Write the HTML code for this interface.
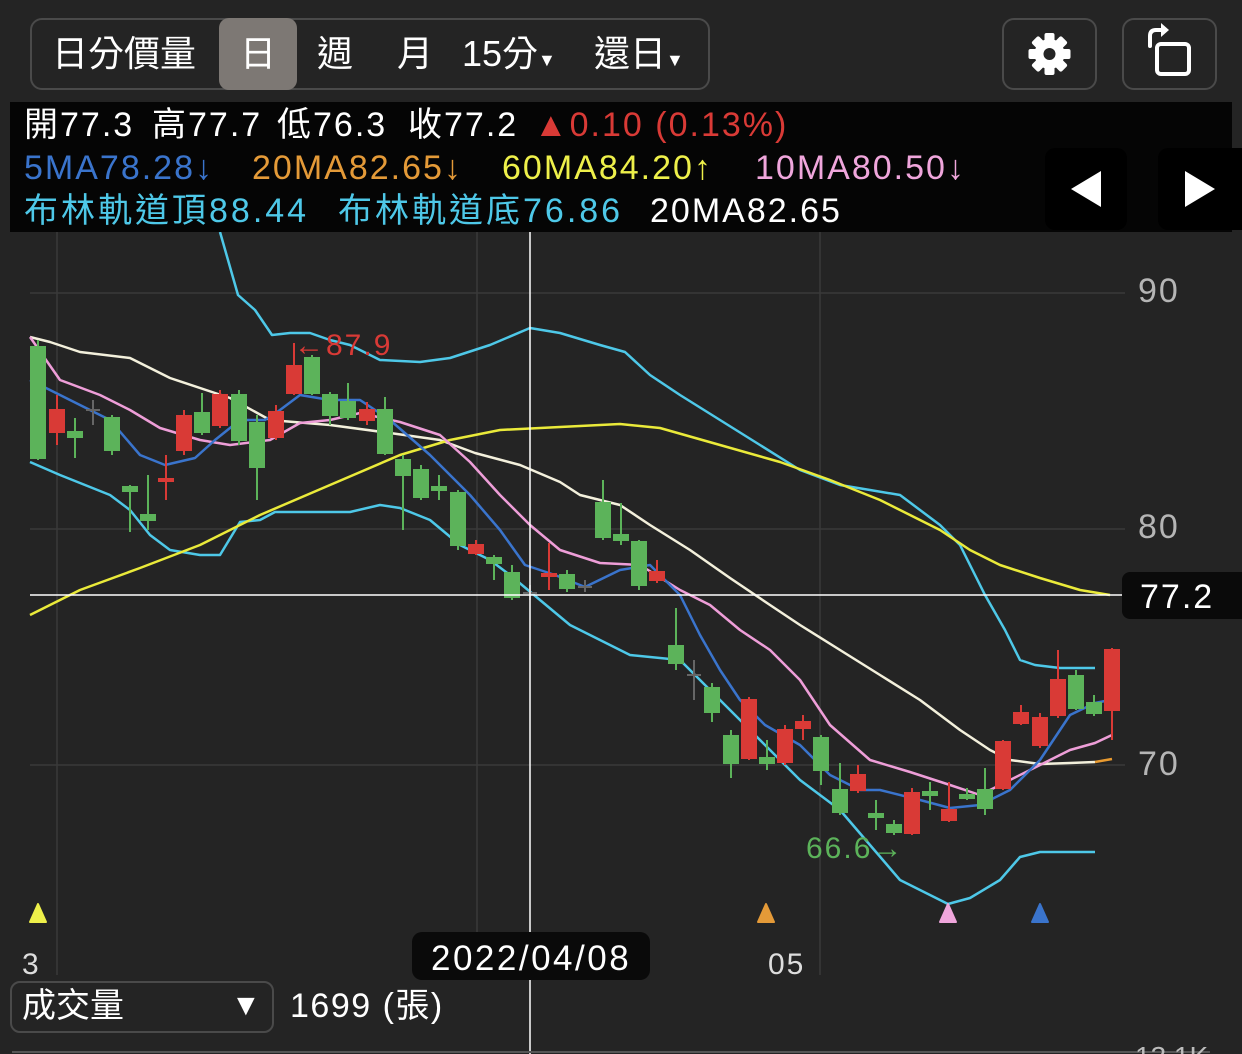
<!DOCTYPE html>
<html><head><meta charset="utf-8">
<style>
html,body{margin:0;padding:0;background:#242424;width:1242px;height:1054px;overflow:hidden;font-family:"Liberation Sans","Noto Sans CJK TC",sans-serif;color:#fff}
.abs{position:absolute}
.t{position:absolute;font-size:34px;line-height:42px;white-space:nowrap;letter-spacing:2px}
</style></head><body>
<div class="abs" style="left:30px;top:18px;width:676px;height:68px;border:2px solid #4a4a4a;border-radius:12px;"></div>
<div class="abs" style="left:219px;top:18px;width:78px;height:72px;background:#7d7874;border-radius:10px;"></div>
<div class="abs" style="left:52px;top:30px;font-size:36px;line-height:48px;white-space:nowrap">日分價量</div>
<div class="abs" style="left:240px;top:30px;font-size:36px;line-height:48px">日</div>
<div class="abs" style="left:317px;top:30px;font-size:36px;line-height:48px">週</div>
<div class="abs" style="left:397px;top:30px;font-size:36px;line-height:48px">月</div>
<div class="abs" style="left:462px;top:30px;font-size:36px;line-height:48px;white-space:nowrap">15分<span style="font-size:18px">▼</span></div>
<div class="abs" style="left:594px;top:30px;font-size:36px;line-height:48px;white-space:nowrap">還日<span style="font-size:18px">▼</span></div>

<div class="abs" style="left:1002px;top:18px;width:91px;height:68px;border:2px solid #4a4a4a;border-radius:12px"></div>
<div class="abs" style="left:1122px;top:18px;width:91px;height:68px;border:2px solid #4a4a4a;border-radius:12px"></div>
<svg class="abs" style="left:1002px;top:18px" width="95" height="72" viewBox="0 0 95 72">
<g transform="translate(47.5,36)" fill="#fff">
<circle r="15"/>
<g><rect x="-5" y="-21" width="10" height="9" rx="2"/><rect x="-5" y="12" width="10" height="9" rx="2"/><rect x="-21" y="-5" width="9" height="10" rx="2"/><rect x="12" y="-5" width="9" height="10" rx="2"/></g>
<g transform="rotate(45)"><rect x="-5" y="-21" width="10" height="9" rx="2"/><rect x="-5" y="12" width="10" height="9" rx="2"/><rect x="-21" y="-5" width="9" height="10" rx="2"/><rect x="12" y="-5" width="9" height="10" rx="2"/></g>
<circle r="6" fill="#242424"/></g></svg>
<svg class="abs" style="left:1122px;top:18px" width="95" height="72" viewBox="0 0 95 72">
<rect x="35" y="26" width="32" height="30" rx="4" fill="none" stroke="#fff" stroke-width="4"/>
<path d="M28 28 V18 Q28 12 34 12 H41" fill="none" stroke="#fff" stroke-width="4" stroke-linecap="round"/>
<path d="M39 5 L47 12 L39 19 Z" fill="#fff"/></svg>

<svg class="abs" style="left:0;top:0" width="1242" height="1054" viewBox="0 0 1242 1054">
<g stroke="#3a3a3a" stroke-width="1.5">
<line x1="30" y1="293" x2="1125" y2="293"/><line x1="30" y1="529" x2="1125" y2="529"/><line x1="30" y1="765" x2="1125" y2="765"/>
<line x1="57" y1="232" x2="57" y2="975"/><line x1="477" y1="232" x2="477" y2="975"/><line x1="820" y1="232" x2="820" y2="975"/>
</g>
<g fill="none" stroke-width="2.5" stroke-linejoin="round">
<polyline stroke="#4ec8e8" points="220,232 238,295 255,310 272,335 290,333 310,333 330,340 350,345 380,360 420,362 450,358 490,345 530,328 560,333 600,345 625,352 650,375 680,395 720,420 760,445 800,470 840,485 870,490 900,495 940,525 960,545 985,595 1005,630 1020,660 1035,665 1060,668 1095,668"/>
<polyline stroke="#4ec8e8" points="30,462 60,475 90,487 110,495 130,510 150,535 170,550 200,555 220,555 240,522 260,520 275,512 300,512 350,512 380,505 400,508 430,520 460,545 490,560 510,575 540,600 570,625 600,640 630,655 680,660 720,700 760,740 800,780 840,810 870,845 900,880 948,904 970,898 1000,880 1020,857 1040,852 1095,852"/>
<polyline stroke="#f3f0dc" points="30,337 50,342 80,352 130,358 170,378 230,398 270,420 330,425 390,433 440,440 475,453 520,465 560,482 580,495 620,505 650,525 690,550 730,578 770,605 800,625 840,650 880,675 920,700 960,730 990,750 1010,760 1040,764 1070,763 1095,762"/>
<polyline stroke="#e89a30" points="1095,762 1112,759"/>
<polyline stroke="#eaea3a" points="30,615 80,590 140,568 200,545 260,515 330,485 400,455 450,440 500,430 560,427 620,424 660,428 720,445 780,462 830,480 880,500 940,530 970,550 1000,565 1040,578 1080,590 1110,595"/>
<polyline stroke="#ee9ed8" points="30,337 60,380 100,395 130,410 160,428 200,440 230,445 270,440 300,423 330,420 360,413 400,422 440,435 470,462 500,495 530,525 560,550 600,563 640,565 680,590 710,605 740,630 770,650 800,680 830,725 870,760 910,772 950,785 980,795 1010,780 1040,765 1070,750 1095,743 1112,735"/>
<polyline stroke="#3a74cc" points="30,380 50,390 80,405 110,420 140,455 165,465 195,458 215,440 240,420 265,420 280,410 300,395 330,400 360,400 390,420 430,455 470,495 500,530 525,565 555,575 585,587 620,570 650,565 680,595 700,635 720,670 740,700 765,725 800,745 830,775 860,790 880,790 920,800 950,808 980,805 1010,790 1040,760 1070,715 1095,703 1110,700"/>
</g>
<g stroke-width="2">
<g fill="#5cb35a" stroke="#5cb35a">
<line x1="38" y1="340" x2="38" y2="460"/><rect x="31" y="347" width="14" height="111"/>
<line x1="75" y1="418" x2="75" y2="458"/><rect x="68" y="432" width="14" height="5"/>
<line x1="112" y1="415" x2="112" y2="455"/><rect x="105" y="418" width="14" height="32"/>
<line x1="130" y1="485" x2="130" y2="532"/><rect x="123" y="487" width="14" height="4"/>
<line x1="148" y1="475" x2="148" y2="530"/><rect x="141" y="515" width="14" height="5"/>
<line x1="202" y1="393" x2="202" y2="435"/><rect x="195" y="413" width="14" height="19"/>
<line x1="239" y1="390" x2="239" y2="445"/><rect x="232" y="395" width="14" height="45"/>
<line x1="257" y1="415" x2="257" y2="500"/><rect x="250" y="423" width="14" height="44"/>
<line x1="312" y1="355" x2="312" y2="395"/><rect x="305" y="358" width="14" height="35"/>
<line x1="330" y1="392" x2="330" y2="425"/><rect x="323" y="395" width="14" height="20"/>
<line x1="348" y1="383" x2="348" y2="420"/><rect x="341" y="402" width="14" height="15"/>
<line x1="385" y1="397" x2="385" y2="455"/><rect x="378" y="410" width="14" height="43"/>
<line x1="403" y1="455" x2="403" y2="530"/><rect x="396" y="460" width="14" height="15"/>
<line x1="421" y1="465" x2="421" y2="500"/><rect x="414" y="470" width="14" height="27"/>
<line x1="439" y1="475" x2="439" y2="500"/><rect x="432" y="487" width="14" height="3"/>
<line x1="458" y1="490" x2="458" y2="550"/><rect x="451" y="493" width="14" height="52"/>
<line x1="494" y1="555" x2="494" y2="580"/><rect x="487" y="558" width="14" height="5"/>
<line x1="512" y1="565" x2="512" y2="600"/><rect x="505" y="573" width="14" height="24"/>
<line x1="567" y1="570" x2="567" y2="592"/><rect x="560" y="575" width="14" height="13"/>
<line x1="603" y1="480" x2="603" y2="540"/><rect x="596" y="503" width="14" height="34"/>
<line x1="621" y1="503" x2="621" y2="545"/><rect x="614" y="535" width="14" height="5"/>
<line x1="639" y1="540" x2="639" y2="590"/><rect x="632" y="542" width="14" height="43"/>
<line x1="676" y1="608" x2="676" y2="670"/><rect x="669" y="646" width="14" height="17"/>
<line x1="712" y1="683" x2="712" y2="722"/><rect x="705" y="688" width="14" height="24"/>
<line x1="731" y1="730" x2="731" y2="778"/><rect x="724" y="736" width="14" height="27"/>
<line x1="767" y1="740" x2="767" y2="770"/><rect x="760" y="758" width="14" height="5"/>
<line x1="821" y1="735" x2="821" y2="785"/><rect x="814" y="738" width="14" height="32"/>
<line x1="840" y1="763" x2="840" y2="815"/><rect x="833" y="790" width="14" height="22"/>
<line x1="876" y1="800" x2="876" y2="830"/><rect x="869" y="814" width="14" height="3"/>
<line x1="894" y1="820" x2="894" y2="835"/><rect x="887" y="825" width="14" height="7"/>
<line x1="930" y1="782" x2="930" y2="810"/><rect x="923" y="792" width="14" height="3"/>
<line x1="967" y1="788" x2="967" y2="800"/><rect x="960" y="795" width="14" height="3"/>
<line x1="985" y1="768" x2="985" y2="815"/><rect x="978" y="790" width="14" height="18"/>
<line x1="1076" y1="670" x2="1076" y2="710"/><rect x="1069" y="676" width="14" height="32"/>
<line x1="1094" y1="695" x2="1094" y2="716"/><rect x="1087" y="703" width="14" height="10"/>
</g>
<g fill="#d93a36" stroke="#d93a36">
<line x1="57" y1="395" x2="57" y2="445"/><rect x="50" y="410" width="14" height="22"/>
<line x1="166" y1="455" x2="166" y2="500"/><rect x="159" y="479" width="14" height="2"/>
<line x1="184" y1="410" x2="184" y2="455"/><rect x="177" y="416" width="14" height="34"/>
<line x1="220" y1="390" x2="220" y2="428"/><rect x="213" y="395" width="14" height="30"/>
<line x1="276" y1="405" x2="276" y2="440"/><rect x="269" y="412" width="14" height="25"/>
<line x1="294" y1="343" x2="294" y2="395"/><rect x="287" y="366" width="14" height="27"/>
<line x1="367" y1="402" x2="367" y2="425"/><rect x="360" y="410" width="14" height="10"/>
<line x1="476" y1="540" x2="476" y2="555"/><rect x="469" y="545" width="14" height="8"/>
<line x1="549" y1="543" x2="549" y2="590"/><rect x="542" y="574" width="14" height="2"/>
<line x1="657" y1="560" x2="657" y2="583"/><rect x="650" y="572" width="14" height="8"/>
<line x1="749" y1="697" x2="749" y2="760"/><rect x="742" y="700" width="14" height="58"/>
<line x1="785" y1="725" x2="785" y2="765"/><rect x="778" y="730" width="14" height="32"/>
<line x1="803" y1="715" x2="803" y2="740"/><rect x="796" y="722" width="14" height="6"/>
<line x1="858" y1="765" x2="858" y2="793"/><rect x="851" y="775" width="14" height="15"/>
<line x1="912" y1="788" x2="912" y2="835"/><rect x="905" y="793" width="14" height="40"/>
<line x1="949" y1="782" x2="949" y2="822"/><rect x="942" y="810" width="14" height="10"/>
<line x1="1003" y1="740" x2="1003" y2="790"/><rect x="996" y="742" width="14" height="46"/>
<line x1="1021" y1="705" x2="1021" y2="725"/><rect x="1014" y="713" width="14" height="10"/>
<line x1="1040" y1="713" x2="1040" y2="748"/><rect x="1033" y="718" width="14" height="27"/>
<line x1="1058" y1="650" x2="1058" y2="718"/><rect x="1051" y="680" width="14" height="35"/>
<line x1="1112" y1="648" x2="1112" y2="740"/><rect x="1105" y="650" width="14" height="60"/>
</g>
<g stroke="#666"><line x1="93" y1="400" x2="93" y2="425"/><line x1="86" y1="410" x2="100" y2="410"/>
<line x1="530" y1="585" x2="530" y2="600"/><line x1="523" y1="593" x2="537" y2="593"/>
<line x1="585" y1="580" x2="585" y2="592"/><line x1="578" y1="587" x2="592" y2="587"/>
<line x1="694" y1="660" x2="694" y2="700"/><line x1="687" y1="675" x2="701" y2="675"/></g>
</g>
<text x="294" y="355" fill="#d93a36" font-size="30" letter-spacing="2" font-family="Liberation Sans">←87.9</text>
<text x="806" y="858" fill="#5cb35a" font-size="30" letter-spacing="2" font-family="Liberation Sans">66.6→</text>
<line x1="530" y1="232" x2="530" y2="1054" stroke="#fff" stroke-width="1.5"/>
<line x1="30" y1="595" x2="1125" y2="595" stroke="#fff" stroke-width="1.5"/>
<g font-size="34" fill="#b5b5b5" letter-spacing="2" font-family="Liberation Sans"><text x="1138" y="302">90</text><text x="1138" y="538">80</text><text x="1138" y="775">70</text></g>
<rect x="1122" y="572" width="130" height="47" rx="8" fill="#0a0a0a"/>
<text x="1140" y="608" fill="#fff" font-size="34" letter-spacing="2" font-family="Liberation Sans">77.2</text>
<path d="M30 922 L38 904 L46 922 Z" fill="#eef04a" stroke="#eef04a" stroke-width="2" stroke-linejoin="round"/>
<path d="M758 922 L766 904 L774 922 Z" fill="#e49a38" stroke="#e49a38" stroke-width="2" stroke-linejoin="round"/>
<path d="M940 922 L948 904 L956 922 Z" fill="#f0a6dc" stroke="#f0a6dc" stroke-width="2" stroke-linejoin="round"/>
<path d="M1032 922 L1040 904 L1048 922 Z" fill="#3a74cc" stroke="#3a74cc" stroke-width="2" stroke-linejoin="round"/>
<g font-size="30" fill="#ddd" letter-spacing="2" font-family="Liberation Sans"><text x="22" y="974">3</text><text x="768" y="974">05</text></g>
<rect x="412" y="932" width="238" height="48" rx="10" fill="#0a0a0a"/>
<text x="431" y="970" fill="#fff" font-size="35" letter-spacing="2.5" font-family="Liberation Sans">2022/04/08</text>
<line x1="12" y1="1052" x2="1210" y2="1052" stroke="#555" stroke-width="2"/>
<text x="1135" y="1066" fill="#bbb" font-size="28" font-family="Liberation Sans">13.1K</text>
</svg>

<div class="abs" style="left:10px;top:102px;width:1222px;height:130px;background:#050505"></div>
<div class="abs" style="left:1045px;top:148px;width:82px;height:82px;background:#000;border-radius:10px"></div>
<div class="abs" style="left:1158px;top:148px;width:84px;height:82px;background:#000;border-radius:10px 0 0 10px"></div>
<svg class="abs" style="left:1045px;top:148px" width="197" height="82"><path d="M26 41 L56 23 L56 59 Z" fill="#fff"/><path d="M140 23 L170 41 L140 59 Z" fill="#fff"/></svg>

<div class="t" style="left:24px;top:104px">開77.3</div>
<div class="t" style="left:152px;top:104px">高77.7</div>
<div class="t" style="left:277px;top:104px">低76.3</div>
<div class="t" style="left:408px;top:104px">收77.2</div>
<div class="t" style="left:534px;top:104px;color:#d93a36">▲0.10 (0.13%)</div>
<div class="t" style="left:24px;top:147px;color:#3a74cc">5MA78.28↓</div>
<div class="t" style="left:252px;top:147px;color:#e49a38">20MA82.65↓</div>
<div class="t" style="left:502px;top:147px;color:#eef04a">60MA84.20↑</div>
<div class="t" style="left:755px;top:147px;color:#f0a6dc">10MA80.50↓</div>
<div class="t" style="left:24px;top:190px;color:#4ec8e8;letter-spacing:3px">布林軌道頂88.44</div>
<div class="t" style="left:338px;top:190px;color:#4ec8e8;letter-spacing:3px">布林軌道底76.86</div>
<div class="t" style="left:650px;top:190px">20MA82.65</div>

<div class="abs" style="left:10px;top:981px;width:260px;height:48px;border:2px solid #4a4a4a;border-radius:10px"></div>
<div class="abs" style="left:22px;top:985px;font-size:34px;line-height:42px">成交量</div>
<div class="abs" style="left:231px;top:985px;font-size:30px;line-height:42px">▼</div>
<div class="t" style="left:290px;top:985px;letter-spacing:1.5px">1699 (張)</div>
</body></html>
